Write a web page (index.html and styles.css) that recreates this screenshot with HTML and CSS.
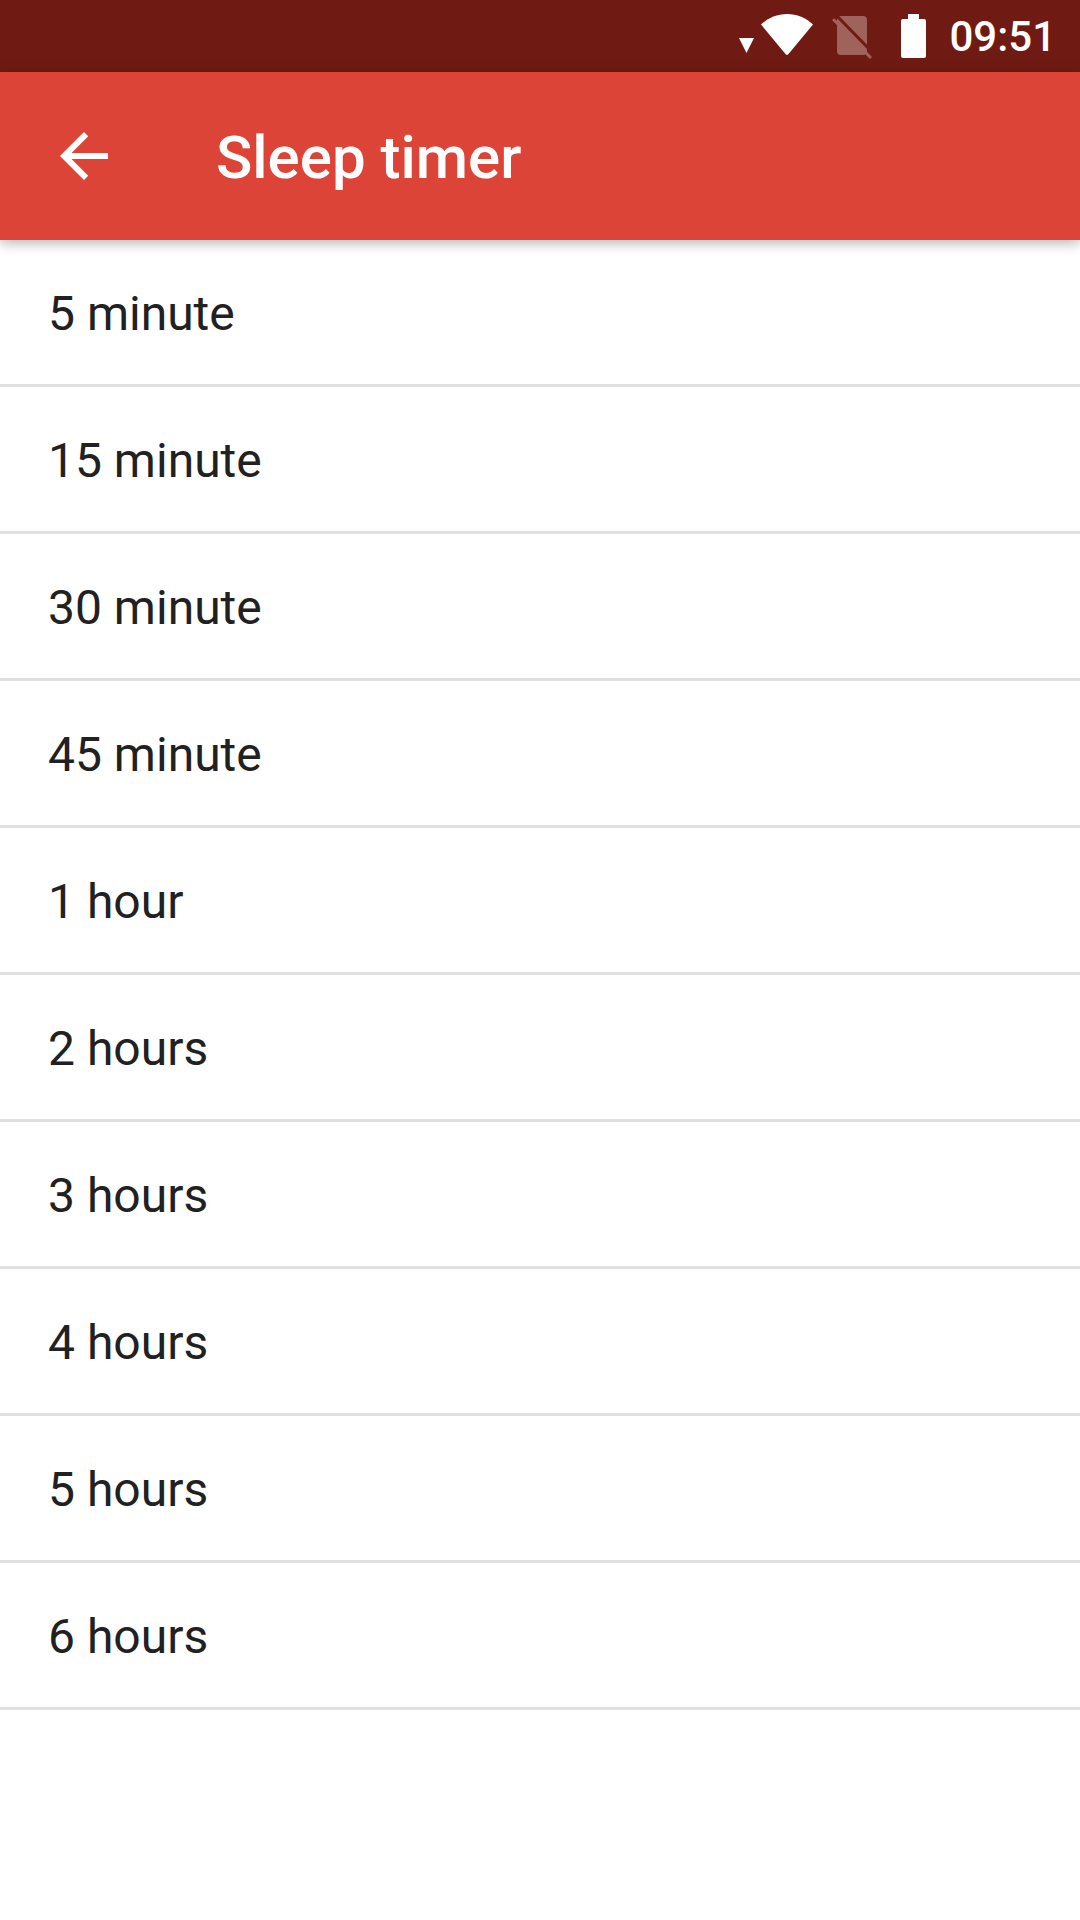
FILE: index.html
```html
<!DOCTYPE html>
<html lang="en">

<head>
    <meta charset="UTF-8">
    <meta name="viewport" content="width=device-width, initial-scale=1.0">
    <title>Sleep timer</title>
    <link rel="stylesheet" href="styles.css">
</head>

<body>
    <div class="status-bar">
        <svg class="signal-icon" width="15" height="72" viewBox="0 0 15 72">
            <path d="M0 38h15l-7.500 15z" fill="#fff" />
        </svg>
        <svg class="wifi-icon" width="52" height="72" viewBox="0 0 52 72">
            <path d="M0 24.500C7 18 16 14 26 14s19 4 26 10.500L27.500 54a2 2 0 0 1-3 0z" fill="#fff" />
        </svg>
        <svg class="sim-icon" width="40" height="72" viewBox="0 0 40 72">
            <rect x="5" y="16" width="30" height="39" rx="4" fill="#a0635c" />
            <path d="M4 15l36 37" stroke="#6f1b13" stroke-width="3" />
            <path d="M2 20l36 37" stroke="#a0635c" stroke-width="3" stroke-linecap="round" />
        </svg>
        <svg class="battery-icon" width="25" height="72" viewBox="0 0 25 72">
            <path d="M7 19v-5h11v5h5a2 2 0 0 1 2 2v35a2 2 0 0 1-2 2H2a2 2 0 0 1-2-2V21a2 2 0 0 1 2-2z" fill="#fff" />
        </svg>
        <span class="clock">09:51</span>
    </div>

    <header class="app-bar">
        <svg class="back-icon" width="72" height="72" viewBox="0 0 24 24">
            <path d="M20 11H7.830l5.590-5.590L12 4l-8 8 8 8 1.410-1.410L7.830 13H20v-2z" fill="#fff" />
        </svg>
        <h1 class="title">Sleep timer</h1>
    </header>

    <ul class="timer-list">
        <li class="timer-item">5 minute</li>
        <li class="timer-item">15 minute</li>
        <li class="timer-item">30 minute</li>
        <li class="timer-item">45 minute</li>
        <li class="timer-item">1 hour</li>
        <li class="timer-item">2 hours</li>
        <li class="timer-item">3 hours</li>
        <li class="timer-item">4 hours</li>
        <li class="timer-item">5 hours</li>
        <li class="timer-item">6 hours</li>
    </ul>
</body>

</html>
```

FILE: styles.css
```css
* {
    margin: 0;
    padding: 0;
    font-family: Roboto, sans-serif;
    box-sizing: border-box;
}

html,
body {
    width: 1080px;
    height: 1920px;
    overflow: hidden;
    background-color: #fff;
}

.status-bar {
    display: flex;
    align-items: center;
    justify-content: flex-end;
    height: 72px;
    padding-right: 24px;
    background-color: #6f1b13;
    color: #fff;
}

.status-bar svg {
    flex-shrink: 0;
}

.wifi-icon {
    margin-left: 7px;
}

.sim-icon {
    margin-left: 19px;
}

.battery-icon {
    margin-left: 29px;
}

.clock {
    margin-left: 23px;
    font-size: 42px;
    font-weight: 500;
}

.app-bar {
    position: relative;
    display: flex;
    align-items: center;
    height: 168px;
    padding-left: 48px;
    background-color: #db4437;
    box-shadow: 0 3px 12px rgba(0, 0, 0, 0.3);
}

.title {
    margin-left: 96px;
    padding-top: 2px;
    color: #fff;
    font-size: 60px;
    font-weight: 500;
}

.timer-list {
    list-style: none;
}

.timer-item {
    display: flex;
    align-items: center;
    height: 147px;
    padding-left: 48px;
    padding-top: 2px;
    border-bottom: 3px solid #e0e0e0;
    color: #212121;
    font-size: 48px;
}
```
